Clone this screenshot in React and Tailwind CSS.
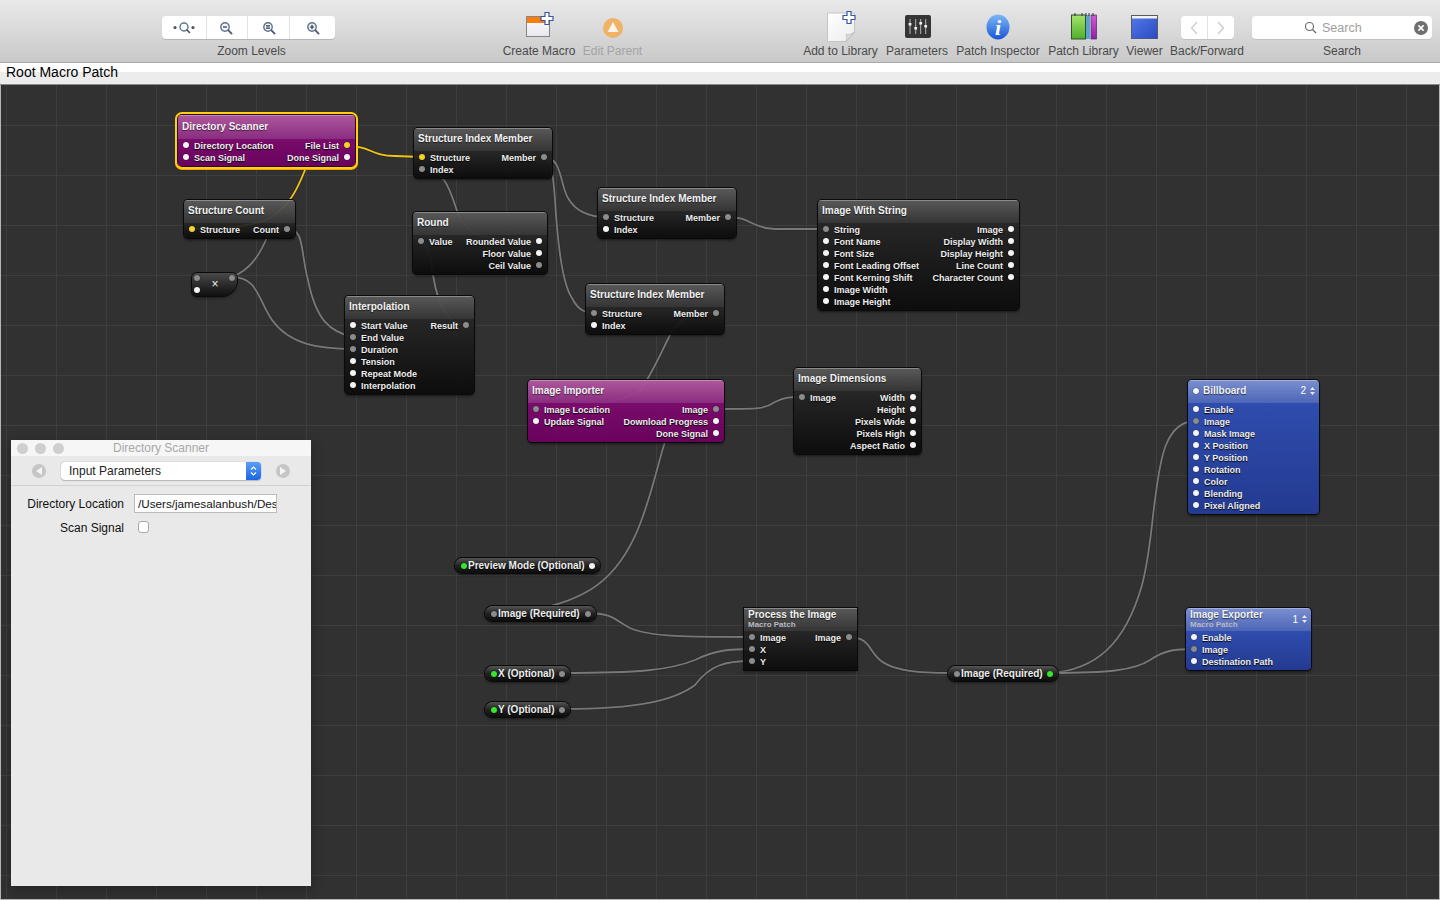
import React from 'react'

const portColors = {
  w: 'bg-[#f4f4f4]',
  g: 'bg-[#8c8c8c]',
  y: 'bg-[#f6d32a]',
  n: 'bg-[#35e62e]',
}

const themes = {
  black: {
    head: 'bg-gradient-to-b from-[#5c5c5cf2] to-[#353535f2]',
    body: 'bg-gradient-to-b from-[#262626ee] to-[#0b0b0bf2]',
  },
  purple: {
    head: 'bg-gradient-to-b from-[#b45aa2f2] to-[#8f2c85f2]',
    body: 'bg-gradient-to-b from-[#7e0a6ef2] to-[#6c0060f2]',
  },
  blue: {
    head: 'bg-gradient-to-b from-[#7c90d0] to-[#4c65b6]',
    body: 'bg-gradient-to-b from-[#2f4dae] to-[#233a90]',
  },
}

const labelText = 'font-bold text-[9px] leading-3 pt-[2px] text-[#eeeeee] [text-shadow:0_1px_1px_#000] whitespace-nowrap'
const pillText = 'font-bold text-[10px] leading-3 text-[#eeeeee] [text-shadow:0_1px_1px_#000] whitespace-nowrap'

const Port = ({ c = 'w' }) => (
  <span className={`block w-[6px] h-[6px] rounded-full shrink-0 shadow-[0_0_1px_#000] ${portColors[c]}`}></span>
)

const Stepper = ({ n }) => (
  <span className="flex items-center gap-[4px] text-[10px] text-white">
    {n}
    <svg width="5" height="8" viewBox="0 0 5 8"><path d="M2.5 0 5 3H0zM2.5 8 0 5h5z" fill="#e8e8e8" /></svg>
  </span>
)

// one patch on the canvas; pos holds its place on the canvas, rows are [label, portcolor]
const Patch = ({ pos, title, sub, inputs = [], outputs = [], theme = 'black', hdr = 'h-[23px] pb-[2px]', corner = 'rounded-[4px]', titlePort, count, ring = 'shadow-[0_0_0_1px_#0a0a0a,0_2px_3px_rgba(0,0,0,.55)]' }) => {
  const t = themes[theme]
  return (
    <div className={`absolute ${pos} ${corner} ${ring} overflow-hidden`}>
      <div className={`${hdr} ${t.head} ${titlePort ? 'pl-[5px]' : 'pl-[4px]'} flex items-center justify-between pr-[4px] shadow-[inset_0_1px_0_rgba(255,255,255,.3)]`}>
        <div className="flex items-center gap-[4px] min-w-0">
          {titlePort && <Port />}
          <div className="flex flex-col">
            <span className="font-bold text-[10px] leading-[10px] text-[#f2f2f2] [text-shadow:0_1px_1px_rgba(0,0,0,.6)] whitespace-nowrap">{title}</span>
            {sub && <span className="font-bold text-[8px] leading-[9px] text-[#b9b9c4] whitespace-nowrap">{sub}</span>}
          </div>
        </div>
        {count && <Stepper n={count} />}
      </div>
      <div className={`${t.body} flex justify-between pb-[3px]`}>
        <div className="flex flex-col">
          {inputs.map(([label, c]) => (
            <div key={label} className="h-3 flex items-center gap-[5px] pl-[5px]">
              <Port c={c} />
              <span className={labelText}>{label}</span>
            </div>
          ))}
        </div>
        <div className="flex flex-col items-end">
          {outputs.map(([label, c]) => (
            <div key={label} className="h-3 flex items-center gap-[5px] pr-[5px]">
              <span className={labelText}>{label}</span>
              <Port c={c} />
            </div>
          ))}
        </div>
      </div>
    </div>
  )
}

const Pill = ({ pos, label, left = 'g', right = 'g' }) => (
  <div className={`absolute ${pos} h-[15px] rounded-full flex items-center justify-between pl-[6px] pr-[5px] bg-gradient-to-b from-[#555555] via-[#222222] to-[#0d0d0d] shadow-[0_0_0_1px_#0a0a0a,0_2px_3px_rgba(0,0,0,.5)]`}>
    <div className="flex items-center gap-[1px]">
      <Port c={left} />
      <span className={pillText}>{label}</span>
    </div>
    <Port c={right} />
  </div>
)

const gray = [
  'M287 229 C305 229 300 250 308 280 C316 320 330 332 353 337',
  'M232 277 C258 277 258 300 272 320 C290 345 320 349 353 349',
  'M232 277 C250 270 260 255 268 235 C272 229 280 229 287 229',
  'M422 169 C445 169 450 190 457 211 C465 235 480 241 539 241',
  'M418 241 C430 241 430 260 433 275 C437 300 445 325 466 325',
  'M544 157 C562 157 560 185 568 198 C576 212 590 217 606 217',
  'M544 157 C552 157 553 175 555 200 C558 250 563 285 572 298 C578 310 585 313 594 313',
  'M728 217 C752 217 750 229 780 229 L826 229',
  'M716 313 C690 313 678 320 670 335 C660 355 650 378 640 390 C620 405 570 409 536 409',
  'M716 409 C760 409 765 409 775 402 C785 397 790 397 802 397',
  'M716 409 C680 409 672 420 664 445 C650 490 640 560 590 590 C565 605 530 613 494 613',
  'M587 613 C612 613 615 620 630 628 C650 637 690 637 752 637',
  'M562 673 C640 673 670 670 695 660 C715 650 730 649 752 649',
  'M562 709 C640 709 675 700 695 685 C710 665 725 661 752 661',
  'M848 637 C870 637 868 650 880 660 C895 673 930 673 957 673',
  'M1050 673 C1095 670 1125 645 1142 585 C1150 555 1152 520 1155 500 C1160 460 1165 421 1196 421',
  'M1050 673 C1110 673 1135 670 1150 660 C1165 650 1175 649 1194 649',
]

const yellow = [
  'M347 146 C372 146 370 156 395 156 L422 157',
  'M347 146 C320 146 312 155 305 170 C297 190 290 205 270 218 C250 228 215 229 192 229',
]

const Cables = () => (
  <svg className="absolute left-0 top-[-85px]" width="1440" height="900" fill="none" strokeLinecap="round">
    {gray.map((d) => (
      <g key={d}>
        <path d={d} stroke="#222222" strokeWidth="3" opacity=".5" />
        <path d={d} stroke="#787878" strokeWidth="1.8" />
      </g>
    ))}
    {yellow.map((d) => (
      <g key={d}>
        <path d={d} stroke="#222222" strokeWidth="3" opacity=".5" />
        <path d={d} stroke="#f2c713" strokeWidth="1.8" />
      </g>
    ))}
  </svg>
)

const Magnifier = ({ mark }) => (
  <svg width="14" height="14" viewBox="0 0 14 14" fill="none">
    <circle cx="6" cy="6" r="4.2" stroke="#5b7390" strokeWidth="1.4" fill="#f4f7fa" />
    <path d="M9.2 9.2 12.6 12.6" stroke="#4a5a70" strokeWidth="1.8" strokeLinecap="round" />
    {mark === 'minus' && <path d="M4 6h4" stroke="#333" strokeWidth="1.2" />}
    {mark === 'equal' && <path d="M4 4.9h4M4 7.1h4" stroke="#333" strokeWidth="1.1" />}
    {mark === 'plus' && <path d="M3.8 6h4.4M6 3.8v4.4" stroke="#333" strokeWidth="1.2" />}
  </svg>
)

const Segment = ({ children, className = '' }) => (
  <div className={`flex items-center justify-center h-full border-r border-[#e2e2e2] last:border-r-0 ${className}`}>{children}</div>
)

const ToolItem = ({ label, className = '', dim, children }) => (
  <div className={`flex flex-col items-center shrink-0 ${className}`}>
    <div className="h-[45px] w-full flex items-center justify-center">{children}</div>
    <span className={`text-[12px] leading-[13px] whitespace-nowrap ${dim ? 'text-[#a4a4a4]' : 'text-[#4a4a4a]'}`}>{label}</span>
  </div>
)

const PlusMark = ({ x, y }) => (
  <path transform={`translate(${x} ${y})`} d="M-2 -6H2V-2H6V2H2V6H-2V2H-6V-2H-2Z" fill="#fff" stroke="#3b55a5" strokeWidth="1.2" />
)

const Toolbar = () => (
  <div className="h-[63px] shrink-0 flex pl-[162px] bg-gradient-to-b from-[#e9e9e9] to-[#c9c9c9] border-b border-[#a9a9a9]">
    <ToolItem label="Zoom Levels" className="w-[179px]">
      <div className="mt-[10px] mr-[6px] w-[173px] h-[23px] bg-white rounded-[4px] shadow-[0_1px_0_#b5b5b5] flex">
        <Segment className="w-[45px]">
          <svg width="24" height="14" viewBox="0 0 24 14" fill="none">
            <circle cx="12" cy="6" r="4" stroke="#5b7390" strokeWidth="1.4" />
            <path d="M15 9l2.5 2.5" stroke="#4a5a70" strokeWidth="1.7" strokeLinecap="round" />
            <circle cx="3" cy="6.5" r="1.6" fill="#555" /><circle cx="21" cy="6.5" r="1.6" fill="#555" />
          </svg>
        </Segment>
        <Segment className="w-[41px] pr-[3px]"><Magnifier mark="minus" /></Segment>
        <Segment className="w-[42px]"><Magnifier mark="equal" /></Segment>
        <Segment className="w-[45px]"><Magnifier mark="plus" /></Segment>
      </div>
    </ToolItem>

    <ToolItem label="Create Macro" className="w-[72px] ml-[162px]">
      <svg width="30" height="28" viewBox="0 0 30 28" className="mt-[4px]">
        <defs>
          <linearGradient id="macroBody" x1="0" y1="0" x2="0" y2="1">
            <stop offset="0" stopColor="#ffffff" />
            <stop offset="1" stopColor="#e6e6ee" />
          </linearGradient>
        </defs>
        <rect x="2.5" y="5.5" width="23" height="20" fill="url(#macroBody)" stroke="#858585" />
        <rect x="3" y="6" width="22" height="6" fill="#f57f0a" />
        <PlusMark x={23} y={7.5} />
      </svg>
    </ToolItem>
    <ToolItem label="Edit Parent" dim className="w-[59px] ml-[8px]">
      <svg width="22" height="22" viewBox="0 0 22 22" className="mt-[10px]">
        <circle cx="11" cy="11" r="10" fill="#efb267" />
        <path d="M11 5 16.5 15H5.5Z" fill="#faf4ea" />
      </svg>
    </ToolItem>

    <ToolItem label="Add to Library" className="w-[75px] ml-[161px]">
      <svg width="32" height="32" viewBox="0 0 32 32" className="mt-[6px]">
        <defs>
          <linearGradient id="pageFill" x1="0" y1="0" x2="1" y2="1">
            <stop offset="0" stopColor="#ffffff" />
            <stop offset="1" stopColor="#ececec" />
          </linearGradient>
        </defs>
        <path d="M2.5 3H29.5V22L21 31.5H2.5Z" fill="url(#pageFill)" stroke="#c4c4c4" />
        <path d="M21 31.5C22 28 21.5 26 21 24.5C24 25 27 24 29.5 22Z" fill="#dcdcdc" stroke="#b0b0b0" strokeWidth=".6" />
        <PlusMark x={24} y={7.5} />
      </svg>
    </ToolItem>
    <ToolItem label="Parameters" className="w-[60px] ml-[9px]">
      <svg width="26" height="26" viewBox="0 0 26 26" className="mt-[9px] ml-[1px]">
        <rect y="1" width="26" height="23" rx="2" fill="#353535" />
        <path d="M5 5v15M10.7 5v15M15.7 5v15M20.7 5v15" stroke="#b5b5b5" strokeWidth="1" />
        <path d="M3.6 9h2.8v2.4H3.6zM9.3 13h2.8v2.4H9.3zM14.3 8h2.8v2.4h-2.8zM19.3 11h2.8v2.4h-2.8z" fill="#efefef" />
      </svg>
    </ToolItem>
    <ToolItem label="Patch Inspector" className="w-[84px] ml-[9px]">
      <svg width="24" height="26" viewBox="0 0 24 26" className="mt-[8px]">
        <defs>
          <linearGradient id="infoBlue" x1="0" y1="0" x2="0" y2="1">
            <stop offset="0" stopColor="#7db8f7" />
            <stop offset="1" stopColor="#1a55d8" />
          </linearGradient>
        </defs>
        <ellipse cx="12" cy="13" rx="11.5" ry="12.5" fill="url(#infoBlue)" />
        <text x="12" y="20.5" textAnchor="middle" fontFamily="'Liberation Serif', serif" fontStyle="italic" fontWeight="700" fontSize="22" fill="#ffffff">i</text>
      </svg>
    </ToolItem>
    <ToolItem label="Patch Library" className="w-[71px] ml-[8px]">
      <svg width="27" height="28" viewBox="0 0 27 28" className="mt-[6px]">
        <defs>
          <linearGradient id="bookGreen" x1="0" y1="0" x2="0" y2="1">
            <stop offset="0" stopColor="#a4e46a" />
            <stop offset="1" stopColor="#4fae2c" />
          </linearGradient>
          <linearGradient id="bookPurple" x1="0" y1="0" x2="0" y2="1">
            <stop offset="0" stopColor="#d45cd6" />
            <stop offset="1" stopColor="#8f1fa8" />
          </linearGradient>
        </defs>
        <rect x="1.5" y="3" width="14" height="24" fill="url(#bookGreen)" stroke="#33502a" />
        <rect x="16" y="3" width="4" height="24" fill="#5aa3cc" />
        <rect x="20" y="3" width="1" height="24" fill="#e6eaee" />
        <rect x="21" y="3" width="5.5" height="24" fill="url(#bookPurple)" stroke="#4c2a5a" strokeWidth=".7" />
        <path d="M5 1v3M12 1v3M16 1v3M19 1v3M23 1v3" stroke="#333" strokeWidth="1" />
      </svg>
    </ToolItem>
    <ToolItem label="Viewer" className="w-[35px] ml-[8px]">
      <svg width="27" height="24" viewBox="0 0 27 24" className="mt-[9px]">
        <defs>
          <linearGradient id="viewerBlue" x1="0" y1="0" x2="1" y2="1">
            <stop offset="0" stopColor="#4f78e6" />
            <stop offset="1" stopColor="#2b49c4" />
          </linearGradient>
        </defs>
        <rect x="0.5" y="0.5" width="26" height="23" fill="#f2f2f2" stroke="#5a5a5a" />
        <rect x="1" y="3.5" width="25" height="20" fill="url(#viewerBlue)" />
      </svg>
    </ToolItem>
    <ToolItem label="Back/Forward" className="w-[74px] ml-[8px]">
      <div className="mt-[10px] w-[53px] h-[23px] bg-white rounded-[4px] shadow-[0_1px_0_#c2c2c2] flex">
        <Segment className="flex-1">
          <svg width="8" height="14" viewBox="0 0 8 14" fill="none"><path d="M7 1 1.5 7 7 13" stroke="#c8c8c8" strokeWidth="1.2" /></svg>
        </Segment>
        <Segment className="flex-1">
          <svg width="8" height="14" viewBox="0 0 8 14" fill="none"><path d="M1 1 6.5 7 1 13" stroke="#c8c8c8" strokeWidth="1.2" /></svg>
        </Segment>
      </div>
    </ToolItem>
    <ToolItem label="Search" className="w-[180px] ml-[8px]">
      <div className="mt-[10px] w-full h-[23px] bg-white rounded-[4px] shadow-[0_1px_0_#c2c2c2] flex items-center justify-between pl-[52px] pr-[4px]">
        <div className="flex items-center gap-[5px]">
          <svg width="13" height="13" viewBox="0 0 13 13" fill="none">
            <circle cx="5.5" cy="5.5" r="4" stroke="#666" strokeWidth="1.1" />
            <path d="M8.5 8.5 12 12" stroke="#666" strokeWidth="1.2" />
          </svg>
          <span className="pt-[1px] text-[12.5px] text-[#9e9e9e]">Search</span>
        </div>
        <svg width="14" height="14" viewBox="0 0 14 14">
          <circle cx="7" cy="7" r="7" fill="#6f6f6f" />
          <path d="M4.4 4.4l5.2 5.2M9.6 4.4l-5.2 5.2" stroke="#fff" strokeWidth="1.6" />
        </svg>
      </div>
    </ToolItem>
  </div>
)

const InspectorWindow = () => (
  <div className="absolute left-[11px] top-[355px] w-[300px] h-[446px] bg-[#e9e9e9] shadow-[0_4px_12px_rgba(0,0,0,.25)] flex flex-col">
    <div className="h-[16px] bg-[#f6f6f6] flex items-center relative">
      <div className="flex gap-[7px] pl-[6px]">
        <span className="w-[11px] h-[11px] rounded-full bg-[#cfcfcf]"></span>
        <span className="w-[11px] h-[11px] rounded-full bg-[#cfcfcf]"></span>
        <span className="w-[11px] h-[11px] rounded-full bg-[#cfcfcf]"></span>
      </div>
      <span className="absolute inset-x-0 text-center text-[12px] text-[#a8a8a8]">Directory Scanner</span>
    </div>
    <div className="h-[30px] border-b border-[#d2d2d2] flex items-center pl-[21px]">
      <span className="w-[14px] h-[14px] rounded-full bg-[#c6c6c6] flex items-center justify-center">
        <svg width="6" height="8" viewBox="0 0 6 8"><path d="M6 0v8L0 4z" fill="#f4f4f4" /></svg>
      </span>
      <div className="ml-[15px] w-[200px] h-[18px] bg-white rounded-[4px] shadow-[0_0_1px_#888,0_1px_1px_#bbb] flex items-center justify-between overflow-hidden">
        <span className="pl-[8px] pt-[1px] text-[12px] text-[#222]">Input Parameters</span>
        <span className="w-[15px] h-full bg-gradient-to-b from-[#5b9df6] to-[#1a66e4] flex items-center justify-center">
          <svg width="7" height="12" viewBox="0 0 7 12" fill="none"><path d="M1 4.5 3.5 2 6 4.5M1 7.5 3.5 10 6 7.5" stroke="#fff" strokeWidth="1.2" /></svg>
        </span>
      </div>
      <span className="ml-[15px] w-[14px] h-[14px] rounded-full bg-[#c6c6c6] flex items-center justify-center">
        <svg width="6" height="8" viewBox="0 0 6 8"><path d="M0 0v8l6-4z" fill="#f4f4f4" /></svg>
      </span>
    </div>
    <div className="flex items-center mt-[8px] h-[19px]">
      <span className="w-[113px] text-right text-[12px] text-[#111]">Directory Location</span>
      <div className="ml-[10px] w-[143px] h-[19px] bg-white border border-[#bcbcbc] pl-[3px] overflow-hidden whitespace-nowrap text-[11.7px] leading-[18px] text-[#111]">
        /Users/jamesalanbush/Des
      </div>
    </div>
    <div className="flex items-center mt-[5px] h-[19px]">
      <span className="w-[113px] text-right text-[12px] text-[#111]">Scan Signal</span>
      <span className="ml-[14px] mb-[1px] w-[11px] h-[12px] bg-white rounded-[3px] border border-[#a8a8a8]"></span>
    </div>
  </div>
)

const Canvas = () => (
  <div className="relative flex-1 bg-[#313131] bg-[linear-gradient(#3e3e3e_1px,transparent_1px),linear-gradient(90deg,#3e3e3e_1px,transparent_1px)] bg-[size:50px_50px] bg-[position:6px_40px] shadow-[inset_1px_0_0_#b5b5b5,inset_-1px_0_0_#b5b5b5,inset_0_-1px_0_#b5b5b5] overflow-hidden">
    <Cables />

    <Patch
      pos="left-[178px] top-[30px] w-[177px]"
      title="Directory Scanner"
      theme="purple"
      hdr="h-[24px] pb-[1px]"
      ring="shadow-[0_0_0_1px_#2a0a28,0_0_0_3px_#ffcf12,0_1px_0_3px_#ff9d00]"
      inputs={[['Directory Location', 'w'], ['Scan Signal', 'w']]}
      outputs={[['File List', 'y'], ['Done Signal', 'w']]}
    />
    <Patch
      pos="left-[414px] top-[43px] w-[138px]"
      title="Structure Index Member"
      inputs={[['Structure', 'y'], ['Index', 'g']]}
      outputs={[['Member', 'g']]}
    />
    <Patch
      pos="left-[184px] top-[115px] w-[111px]"
      title="Structure Count"
      inputs={[['Structure', 'y']]}
      outputs={[['Count', 'g']]}
    />
    <Patch
      pos="left-[413px] top-[127px] w-[134px]"
      title="Round"
      inputs={[['Value', 'g']]}
      outputs={[['Rounded Value', 'w'], ['Floor Value', 'w'], ['Ceil Value', 'g']]}
    />
    <Patch
      pos="left-[598px] top-[103px] w-[138px]"
      title="Structure Index Member"
      inputs={[['Structure', 'g'], ['Index', 'w']]}
      outputs={[['Member', 'g']]}
    />
    <Patch
      pos="left-[586px] top-[199px] w-[138px]"
      title="Structure Index Member"
      inputs={[['Structure', 'g'], ['Index', 'w']]}
      outputs={[['Member', 'g']]}
    />
    <Patch
      pos="left-[818px] top-[115px] w-[201px]"
      title="Image With String"
      inputs={[['String', 'g'], ['Font Name', 'w'], ['Font Size', 'w'], ['Font Leading Offset', 'w'], ['Font Kerning Shift', 'w'], ['Image Width', 'w'], ['Image Height', 'w']]}
      outputs={[['Image', 'w'], ['Display Width', 'w'], ['Display Height', 'w'], ['Line Count', 'w'], ['Character Count', 'w']]}
    />
    <Patch
      pos="left-[345px] top-[211px] w-[129px]"
      title="Interpolation"
      inputs={[['Start Value', 'w'], ['End Value', 'g'], ['Duration', 'g'], ['Tension', 'w'], ['Repeat Mode', 'w'], ['Interpolation', 'w']]}
      outputs={[['Result', 'g']]}
    />
    <Patch
      pos="left-[528px] top-[295px] w-[196px]"
      title="Image Importer"
      theme="purple"
      inputs={[['Image Location', 'g'], ['Update Signal', 'w']]}
      outputs={[['Image', 'g'], ['Download Progress', 'w'], ['Done Signal', 'w']]}
    />
    <Patch
      pos="left-[794px] top-[283px] w-[127px]"
      title="Image Dimensions"
      inputs={[['Image', 'g']]}
      outputs={[['Width', 'w'], ['Height', 'w'], ['Pixels Wide', 'w'], ['Pixels High', 'w'], ['Aspect Ratio', 'w']]}
    />
    <Patch
      pos="left-[1188px] top-[295px] w-[131px]"
      title="Billboard"
      theme="blue"
      titlePort
      count="2"
      inputs={[['Enable', 'w'], ['Image', 'g'], ['Mask Image', 'w'], ['X Position', 'w'], ['Y Position', 'w'], ['Rotation', 'w'], ['Color', 'w'], ['Blending', 'w'], ['Pixel Aligned', 'w']]}
    />
    <Patch
      pos="left-[744px] top-[523px] w-[113px]"
      title="Process the Image"
      sub="Macro Patch"
      corner="rounded-none"
      hdr="h-[23px] pb-[1px]"
      inputs={[['Image', 'g'], ['X', 'g'], ['Y', 'g']]}
      outputs={[['Image', 'g']]}
    />
    <Patch
      pos="left-[1186px] top-[523px] w-[125px]"
      title="Image Exporter"
      sub="Macro Patch"
      theme="blue"
      count="1"
      hdr="h-[23px] pb-[1px]"
      inputs={[['Enable', 'w'], ['Image', 'g'], ['Destination Path', 'w']]}
    />

    {/* multiply patch */}
    <div className="absolute left-[192px] top-[188px] w-[45px] h-[23px] rounded-[5px] rounded-br-[16px] bg-gradient-to-b from-[#4a4a4a] to-[#101010] shadow-[0_0_0_1px_#0a0a0a,0_2px_3px_rgba(0,0,0,.5)] flex items-center justify-center">
      <span className="pb-[1px] pl-[1px] text-[12px] leading-none text-[#eeeeee]">×</span>
      <span className="absolute left-[2px] top-[2px]"><Port c="g" /></span>
      <span className="absolute left-[2px] top-[14px]"><Port c="w" /></span>
      <span className="absolute right-[2px] top-[2px]"><Port c="g" /></span>
    </div>

    <Pill pos="left-[455px] top-[473px] w-[145px]" label="Preview Mode (Optional)" left="n" right="w" />
    <Pill pos="left-[485px] top-[521px] w-[111px]" label="Image (Required)" />
    <Pill pos="left-[485px] top-[581px] w-[85px]" label="X (Optional)" left="n" />
    <Pill pos="left-[485px] top-[617px] w-[85px]" label="Y (Optional)" left="n" />
    <Pill pos="left-[948px] top-[581px] w-[110px]" label="Image (Required)" right="n" />

    <InspectorWindow />
  </div>
)

export default function App() {
  return (
    <div className="w-[1440px] h-[900px] flex flex-col overflow-hidden font-['Liberation_Sans',Arial,sans-serif]">
      <Toolbar />
      <div className="h-[22px] shrink-0 bg-[linear-gradient(#ffffff_0,#ffffff_9px,#ececec_9px,#ececec_100%)] border-b border-[#8a8a8a] pl-[6px] text-[14px] leading-[18px] text-black">
        Root Macro Patch
      </div>
      <Canvas />
    </div>
  )
}
